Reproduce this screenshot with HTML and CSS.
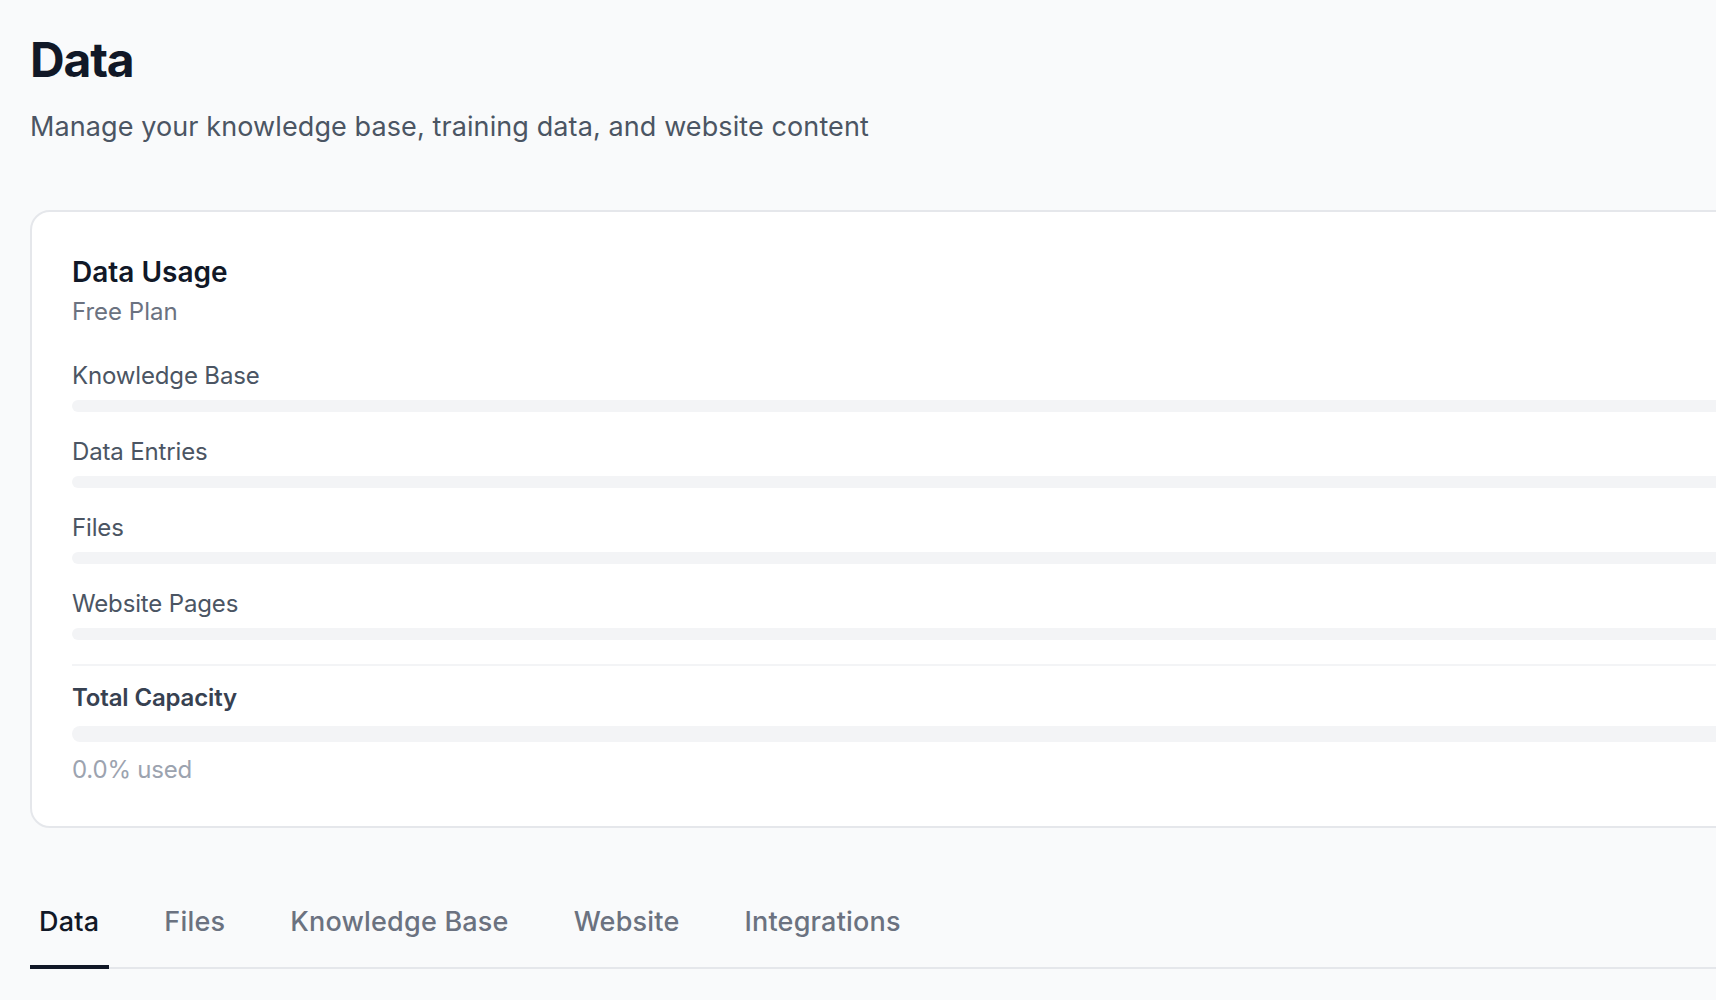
FILE: index.html
```html
<html>
	<head>
		<title>Data</title>
		<link rel="stylesheet" href="styles.css">
	</head>
	<body>
		<div class="page">
			<h1 class="page_title">Data</h1>
			<p class="page_subtitle">Manage your knowledge base, training data, and website content</p>

			<!-- usage card -->
			<div class="usage_card">
				<h2 class="usage_title">Data Usage</h2>
				<div class="usage_plan">Free Plan</div>

				<div class="usage_rows">
					<div class="usage_row">
						<div class="usage_label">Knowledge Base</div>
						<div class="bar"><div class="bar_fill" style="width: 0%;"></div></div>
					</div>
					<div class="usage_row">
						<div class="usage_label">Data Entries</div>
						<div class="bar"><div class="bar_fill" style="width: 0%;"></div></div>
					</div>
					<div class="usage_row">
						<div class="usage_label">Files</div>
						<div class="bar"><div class="bar_fill" style="width: 0%;"></div></div>
					</div>
					<div class="usage_row">
						<div class="usage_label">Website Pages</div>
						<div class="bar"><div class="bar_fill" style="width: 0%;"></div></div>
					</div>
				</div>

				<div class="usage_total">
					<div class="total_label">Total Capacity</div>
					<div class="bar bar_big"><div class="bar_fill" style="width: 0%;"></div></div>
					<div class="total_note">0.0% used</div>
				</div>
			</div>

			<!-- tabs -->
			<div class="tabs">
				<a class="tab active">Data</a>
				<a class="tab">Files</a>
				<a class="tab">Knowledge Base</a>
				<a class="tab">Website</a>
				<a class="tab">Integrations</a>
			</div>
		</div>
	</body>
</html>
```

FILE: styles.css
```css
/* page */
html {
	overflow: hidden;
}

body {
	margin: 0;
	background-color: #f9fafb;
	font-family: Inter, "Noto Sans", sans-serif;
	color: #111827;
}

.page {
	width: 1800px;
	padding: 31px 0 0 30px;
}

.page_title {
	margin: 0;
	font-size: 48px;
	line-height: 58px;
	font-weight: 700;
	color: #111827;
	letter-spacing: -1.2px;
}

.page_subtitle {
	margin: 18px 0 0 0;
	font-size: 27px;
	line-height: 39px;
	color: #4b5563;
	letter-spacing: 0.1px;
}

/* usage card */
.usage_card {
	margin-top: 64px;
	background-color: white;
	border: 2px solid #e5e7eb;
	border-radius: 20px;
	padding: 40px;
}

.usage_title {
	margin: 0;
	font-size: 28px;
	line-height: 40px;
	font-weight: 600;
	color: #111827;
}

.usage_plan {
	margin-top: 4px;
	font-size: 24px;
	line-height: 32px;
	color: #6b7280;
}

.usage_rows {
	margin-top: 32px;
	display: flex;
	flex-direction: column;
	gap: 24px;
}

.usage_label {
	font-size: 24px;
	line-height: 32px;
	color: #4b5563;
	letter-spacing: -0.15px;
}

.bar {
	margin-top: 8px;
	height: 12px;
	border-radius: 999px;
	background-color: #f3f4f6;
	overflow: hidden;
}

.bar_fill {
	height: 100%;
	background-color: #111827;
}

.bar_big {
	margin-top: 12px;
	height: 16px;
}

.usage_total {
	margin-top: 24px;
	border-top: 2px solid #f3f4f6;
	padding-top: 16px;
}

.total_label {
	font-size: 24px;
	line-height: 32px;
	font-weight: 600;
	color: #374151;
	letter-spacing: -0.15px;
}

.total_note {
	margin-top: 12px;
	font-size: 24px;
	line-height: 32px;
	color: #9ca3af;
	letter-spacing: -0.2px;
}

/* tabs */
.tabs {
	margin-top: 76px;
	display: flex;
	gap: 46px;
	border-bottom: 2px solid #e5e7eb;
}

.tab {
	padding: 0 10px 25px 9px;
	margin-bottom: -2px;
	border-bottom: 4px solid transparent;
	font-size: 27px;
	line-height: 36px;
	font-weight: 500;
	letter-spacing: 0.2px;
	color: #6b7280;
}

.tab.active {
	color: #111827;
	border-bottom-color: #111827;
}
```
